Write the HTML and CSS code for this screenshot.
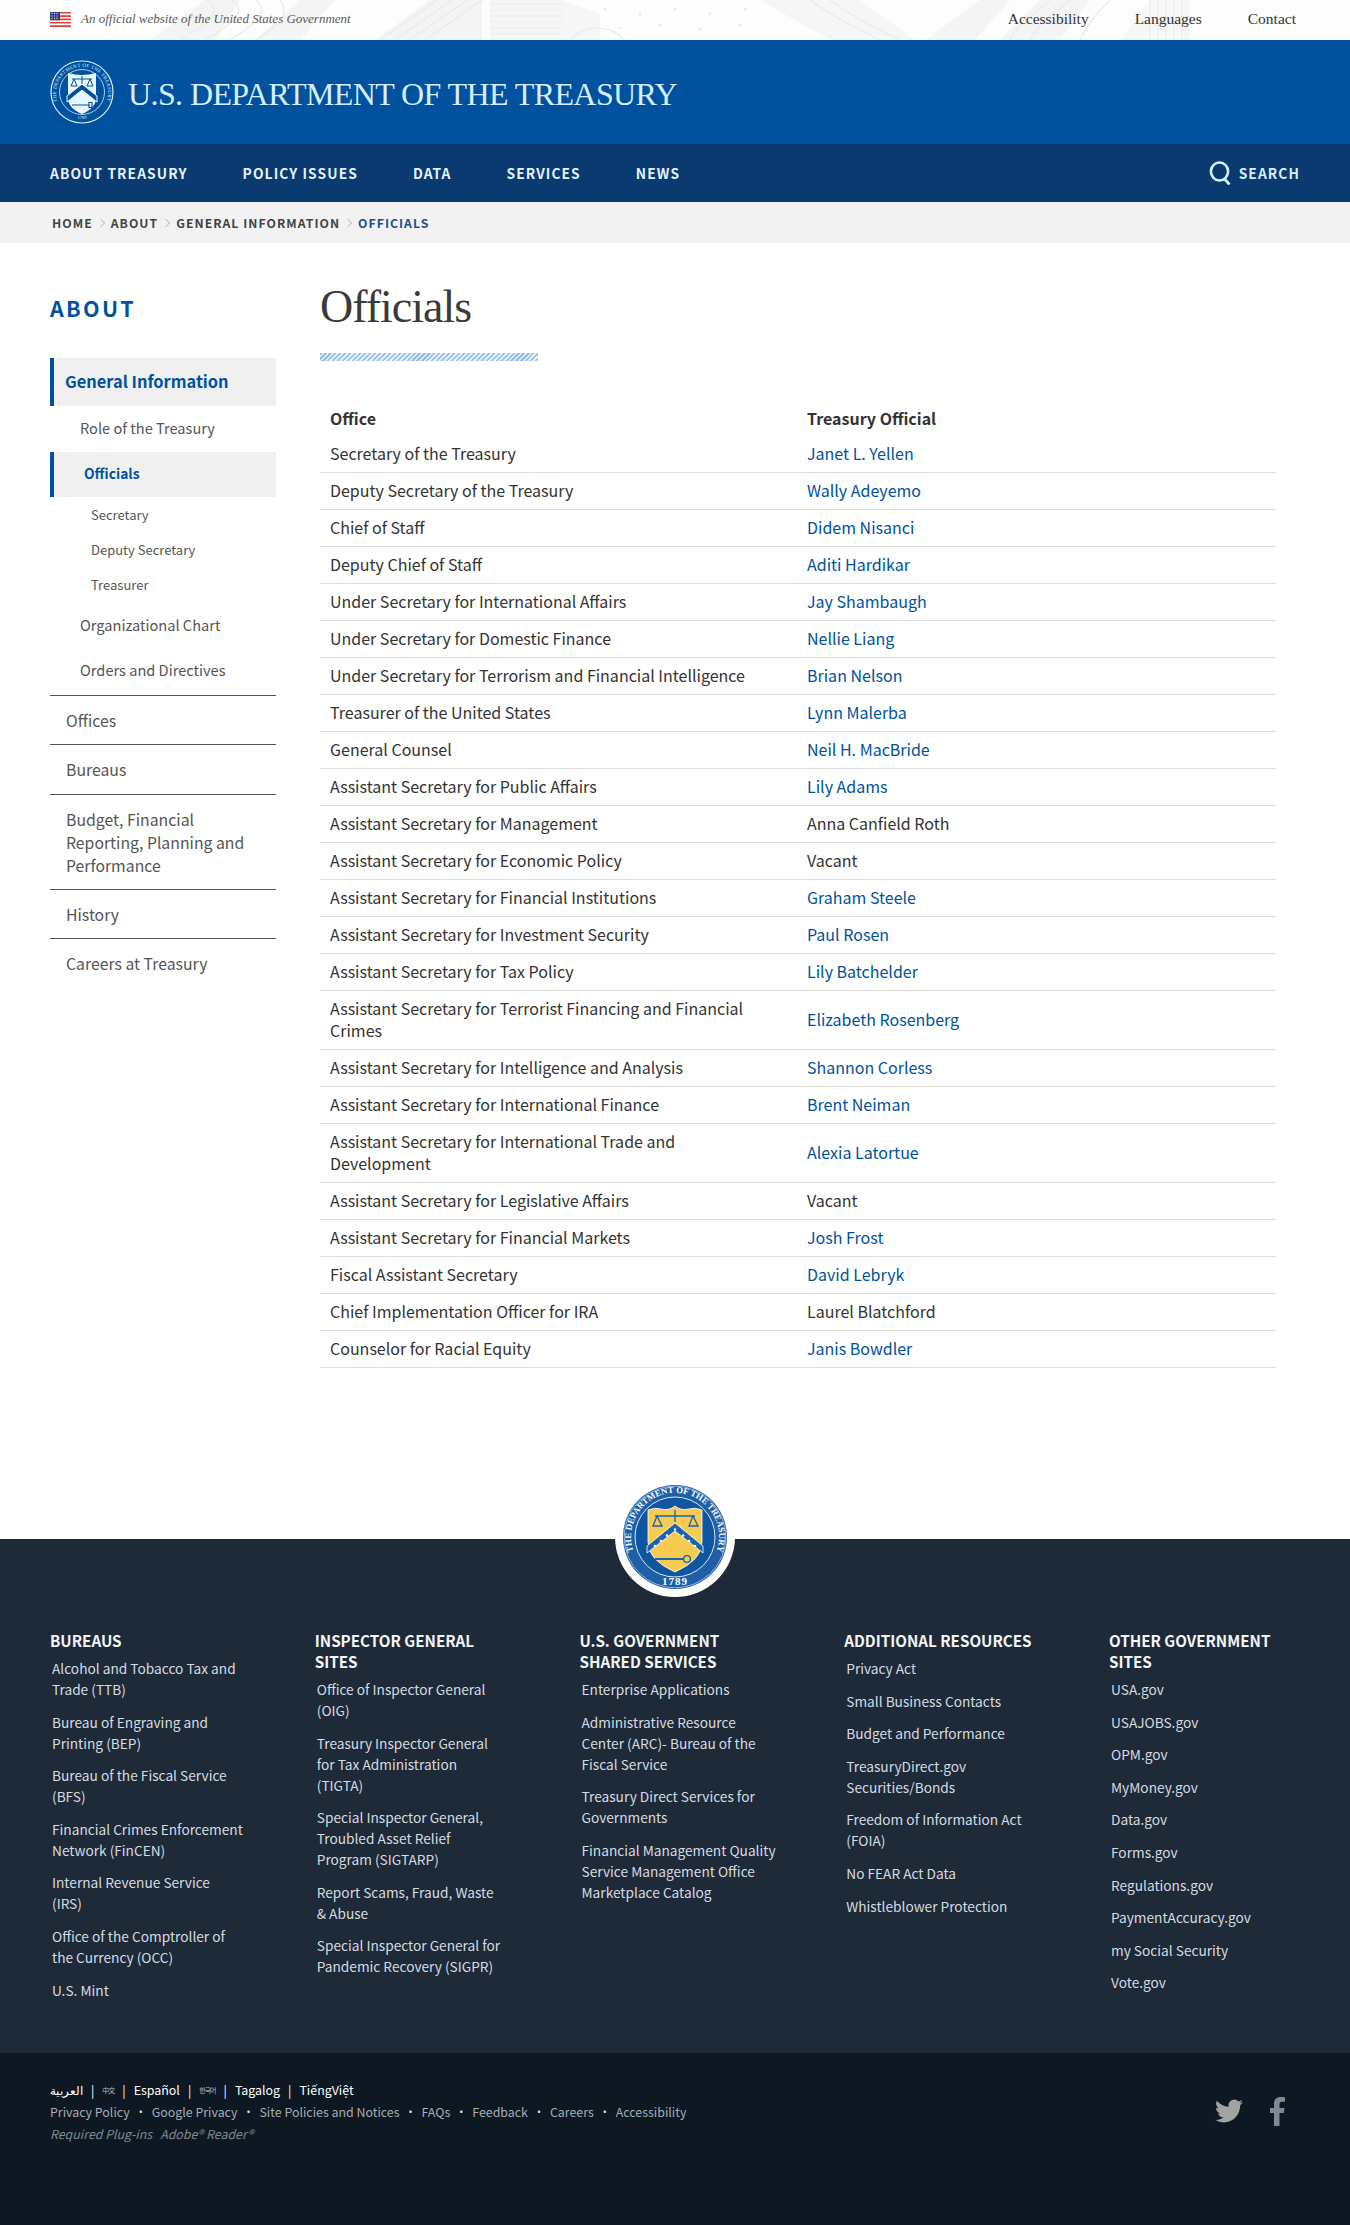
FILE: index.html
```html
<!DOCTYPE html>
<html lang="en">
<head>
<meta charset="utf-8">
<title>Officials | U.S. Department of the Treasury</title>
<link rel="stylesheet" href="styles.css">
</head>
<body>
<div class="gov-bar">
  <svg class="gov-art" viewBox="0 0 1350 40" preserveAspectRatio="none" aria-hidden="true">
    <g fill="#f4f4f4">
      <path d="M150 40 L205 0 H240 L215 40Z M255 40 L300 0 H335 L300 40Z"/>
      <path d="M375 40 L430 0 H482 V40Z"/>
      <path d="M490 40 V0 H563 L600 14 V40Z" fill="#f6f6f6"/>
      <path d="M760 0 H860 L915 40 H830Z" fill="#f6f6f6"/>
      <path d="M925 40 L980 0 H1010 L975 40Z M1000 40 L1040 0 H1090 L1060 40Z"/>
      <path d="M1120 40 L1150 0 H1190 V40Z" fill="#f7f7f7"/>
    </g>
    <g fill="none" stroke="#ebebeb" stroke-width="1.200">
      <path d="M180 40 C215 20 225 8 200 -4 M205 40 C240 20 250 8 225 -4 M230 40 C262 20 272 8 250 -4 M255 40 C285 22 292 8 275 -4"/>
      <path d="M380 40 L440 -2 M395 40 L455 -2 M410 40 L470 -2 M425 40 L485 -2"/>
      <path d="M490 4H563 M490 10H563 M490 16H563 M490 22H563 M490 28H563 M490 34H563"/>
      <path d="M570 40 C585 24 610 24 625 40"/>
      <path d="M880 40 C850 25 830 15 810 0 M900 40 C870 25 850 15 830 0"/>
      <path d="M1010 40 C1020 20 1040 10 1050 0 M1030 40 C1040 20 1060 10 1070 0 M1080 40 C1090 20 1100 10 1110 0"/>
      <path d="M1150 40V0 M1158 40V0 M1166 40V0 M1174 40V0 M1182 40V0"/>
    </g>
    <g fill="#e9e9e9">
      <circle cx="605" cy="9" r="1.500"/><circle cx="640" cy="14" r="1.500"/><circle cx="675" cy="9" r="1.500"/><circle cx="710" cy="14" r="1.500"/><circle cx="745" cy="9" r="1.500"/>
      <circle cx="620" cy="28" r="1.500"/><circle cx="660" cy="25" r="1.500"/><circle cx="700" cy="29" r="1.500"/><circle cx="740" cy="25" r="1.500"/>
    </g>
  </svg>
  <div class="gov-note">
    <svg class="flag" viewBox="0 0 21 15" aria-hidden="true">
      <rect width="21" height="15" fill="#fff"/>
      <path d="M0 0h21v1.600H0zM0 3.300h21v1.600H0zM0 6.600h21v1.600H0zM0 9.900h21v1.600H0zM0 13.200h21V15H0z" fill="#d8433f"/>
      <rect width="10" height="8.200" fill="#2e3f7f"/>
      <path d="M1.500 1.500h1M4 1.500h1M6.500 1.500h1M1.500 4h1M4 4h1M6.500 4h1M1.500 6.400h1M4 6.400h1M6.500 6.400h1" stroke="#fff" stroke-width="1"/>
    </svg>
    <em>An official website of the United States Government</em>
  </div>
  <nav class="gov-links">
    <a href="#">Accessibility</a>
    <a href="#">Languages</a>
    <a href="#">Contact</a>
  </nav>
</div>

<header class="masthead">
  <svg class="mast-seal" viewBox="0 0 64 64" aria-hidden="true">
    <defs><path id="mastArc" d="M7 40 A26 26 0 1 1 57 40"/></defs>
    <circle cx="32" cy="32" r="31" fill="none" stroke="#d6eeff" stroke-width="1.200"/>
    <circle cx="32" cy="32" r="22.500" fill="none" stroke="#d6eeff" stroke-width=".8"/>
    <text class="mast-seal-text"><textPath href="#mastArc" startOffset="50%" text-anchor="middle">THE DEPARTMENT OF THE TREASURY</textPath></text>
    <text class="mast-seal-year" x="32" y="59" text-anchor="middle">1789</text>
    <path d="M18 13 Q32 17 46 13 V38 Q46 48 32 54 Q18 48 18 38Z" fill="#eaf6ff"/>
    <path d="M17 36 L32 24 L47 36 V42 L32 30 L17 42Z" fill="#00529f" stroke="#eaf6ff" stroke-width="1"/>
    <path d="M22 19H42 M32 16V24 M24 19L21 26H27Z M40 19L37 26H43Z" fill="none" stroke="#00529f" stroke-width="1"/>
    <path d="M22 45H39 M39 42.500h3v5h-3z" fill="none" stroke="#00529f" stroke-width="1.200"/>
  </svg>
  <div class="mast-title">U.S. DEPARTMENT OF THE TREASURY</div>
</header>

<nav class="main-nav">
  <div class="main-links">
    <a href="#">ABOUT TREASURY</a>
    <a href="#">POLICY ISSUES</a>
    <a href="#">DATA</a>
    <a href="#">SERVICES</a>
    <a href="#">NEWS</a>
  </div>
  <a class="search" href="#">
    <svg class="search-icon" viewBox="0 0 23 24" aria-hidden="true">
      <ellipse cx="10.500" cy="10.500" rx="8.600" ry="9" fill="none" stroke="#d6eeff" stroke-width="2.600"/>
      <path d="M15.500 18 L20.500 23.500" stroke="#d6eeff" stroke-width="2.800"/>
    </svg>
    SEARCH
  </a>
</nav>

<div class="crumbs">
  <a href="#">HOME</a><span class="crumb-sep"></span>
  <a href="#">ABOUT</a><span class="crumb-sep"></span>
  <a href="#">GENERAL INFORMATION</a><span class="crumb-sep"></span>
  <a class="crumb-current" href="#">OFFICIALS</a>
</div>

<div class="page">
  <aside class="side">
    <h2 class="side-title">ABOUT</h2>
    <a class="side-main is-active" href="#">General Information</a>
    <a class="side-sub side-sub-first" href="#">Role of the Treasury</a>
    <a class="side-current" href="#">Officials</a>
    <a class="side-leaf" href="#">Secretary</a>
    <a class="side-leaf" href="#">Deputy Secretary</a>
    <a class="side-leaf" href="#">Treasurer</a>
    <a class="side-sub side-sub-gap" href="#">Organizational Chart</a>
    <a class="side-sub side-sub-last" href="#">Orders and Directives</a>
    <a class="side-item" href="#">Offices</a>
    <a class="side-item" href="#">Bureaus</a>
    <a class="side-item" href="#">Budget, Financial Reporting, Planning and Performance</a>
    <a class="side-item" href="#">History</a>
    <a class="side-item" href="#">Careers at Treasury</a>
  </aside>
  <main class="content">
    <h1 class="page-title">Officials</h1>
    <div class="stripes"></div>
    <table class="officials">
      <thead><tr><th>Office</th><th>Treasury Official</th></tr></thead>
      <tbody>
        <tr><td>Secretary of the Treasury</td><td><a href="#">Janet L. Yellen</a></td></tr>
        <tr><td>Deputy Secretary of the Treasury</td><td><a href="#">Wally Adeyemo</a></td></tr>
        <tr><td>Chief of Staff</td><td><a href="#">Didem Nisanci</a></td></tr>
        <tr><td>Deputy Chief of Staff</td><td><a href="#">Aditi Hardikar</a></td></tr>
        <tr><td>Under Secretary for International Affairs</td><td><a href="#">Jay Shambaugh</a></td></tr>
        <tr><td>Under Secretary for Domestic Finance</td><td><a href="#">Nellie Liang</a></td></tr>
        <tr><td>Under Secretary for Terrorism and Financial Intelligence</td><td><a href="#">Brian Nelson</a></td></tr>
        <tr><td>Treasurer of the United States</td><td><a href="#">Lynn Malerba</a></td></tr>
        <tr><td>General Counsel</td><td><a href="#">Neil H. MacBride</a></td></tr>
        <tr><td>Assistant Secretary for Public Affairs</td><td><a href="#">Lily Adams</a></td></tr>
        <tr><td>Assistant Secretary for Management</td><td>Anna Canfield Roth</td></tr>
        <tr><td>Assistant Secretary for Economic Policy</td><td>Vacant</td></tr>
        <tr><td>Assistant Secretary for Financial Institutions</td><td><a href="#">Graham Steele</a></td></tr>
        <tr><td>Assistant Secretary for Investment Security</td><td><a href="#">Paul Rosen</a></td></tr>
        <tr><td>Assistant Secretary for Tax Policy</td><td><a href="#">Lily Batchelder</a></td></tr>
        <tr><td>Assistant Secretary for Terrorist Financing and Financial Crimes</td><td><a href="#">Elizabeth Rosenberg</a></td></tr>
        <tr><td>Assistant Secretary for Intelligence and Analysis</td><td><a href="#">Shannon Corless</a></td></tr>
        <tr><td>Assistant Secretary for International Finance</td><td><a href="#">Brent Neiman</a></td></tr>
        <tr><td>Assistant Secretary for International Trade and Development</td><td><a href="#">Alexia Latortue</a></td></tr>
        <tr><td>Assistant Secretary for Legislative Affairs</td><td>Vacant</td></tr>
        <tr><td>Assistant Secretary for Financial Markets</td><td><a href="#">Josh Frost</a></td></tr>
        <tr><td>Fiscal Assistant Secretary</td><td><a href="#">David Lebryk</a></td></tr>
        <tr><td>Chief Implementation Officer for IRA</td><td>Laurel Blatchford</td></tr>
        <tr><td>Counselor for Racial Equity</td><td><a href="#">Janis Bowdler</a></td></tr>
      </tbody>
    </table>
  </main>
</div>

<footer class="site-footer">
  <svg class="foot-seal" viewBox="0 0 120 120" aria-hidden="true">
    <defs><path id="sealArc" d="M24 85.200 A44 44 0 1 1 96 85.200"/></defs>
    <circle cx="60" cy="60" r="60" fill="#fff"/>
    <circle cx="60" cy="60" r="52" fill="#1f5fa8"/>
    <circle cx="60" cy="60" r="50.800" fill="none" stroke="#8db7dd" stroke-width="1"/>
    <circle cx="60" cy="60" r="40" fill="#0e56a0" stroke="#d8e8f5" stroke-width="1"/>
    <text class="seal-text"><textPath href="#sealArc" startOffset="50%" text-anchor="middle">THE DEPARTMENT OF THE TREASURY</textPath></text>
    <text class="seal-year" x="60" y="108" text-anchor="middle">1789</text>
    <g transform="translate(0 3)">
      <path d="M33 30 Q40 27 46 29 Q54 31 60 26 Q66 31 74 29 Q80 27 87 30 V62 Q87 80 60 92 Q33 80 33 62Z" fill="#f5cb52" stroke="#fff" stroke-width=".8"/>
      <path d="M32 66 L60 43 L88 66 V73 L60 51 L32 73Z" fill="#1b63ad" stroke="#fff" stroke-width=".8"/>
      <g fill="#fff">
        <circle cx="40" cy="66" r="1.300"/><circle cx="46" cy="61" r="1.300"/><circle cx="52" cy="55.500" r="1.300"/><circle cx="60" cy="49.500" r="1.300"/>
        <circle cx="68" cy="55.500" r="1.300"/><circle cx="74" cy="61" r="1.300"/><circle cx="80" cy="66" r="1.300"/>
      </g>
      <path d="M40 36 H80 M60 30 V42 M42 36 L38 46 H47 Z M78 36 L74 46 H83 Z" fill="none" stroke="#1b63ad" stroke-width="1.300"/>
      <path d="M40 79 H68" stroke="#1b63ad" stroke-width="2"/>
      <circle cx="72" cy="79" r="3.400" fill="none" stroke="#1b63ad" stroke-width="1.400"/>
    </g>
  </svg>
  <div class="foot-cols">
    <section class="foot-col">
      <h3>BUREAUS</h3>
      <a href="#">Alcohol and Tobacco Tax and<br>Trade (TTB)</a>
      <a href="#">Bureau of Engraving and<br>Printing (BEP)</a>
      <a href="#">Bureau of the Fiscal Service<br>(BFS)</a>
      <a href="#">Financial Crimes Enforcement<br>Network (FinCEN)</a>
      <a href="#">Internal Revenue Service<br>(IRS)</a>
      <a href="#">Office of the Comptroller of<br>the Currency (OCC)</a>
      <a href="#">U.S. Mint</a>
    </section>
    <section class="foot-col">
      <h3>INSPECTOR GENERAL SITES</h3>
      <a href="#">Office of Inspector General<br>(OIG)</a>
      <a href="#">Treasury Inspector General<br>for Tax Administration<br>(TIGTA)</a>
      <a href="#">Special Inspector General,<br>Troubled Asset Relief<br>Program (SIGTARP)</a>
      <a href="#">Report Scams, Fraud, Waste<br>&amp; Abuse</a>
      <a href="#">Special Inspector General for<br>Pandemic Recovery (SIGPR)</a>
    </section>
    <section class="foot-col">
      <h3>U.S. GOVERNMENT SHARED SERVICES</h3>
      <a href="#">Enterprise Applications</a>
      <a href="#">Administrative Resource<br>Center (ARC)- Bureau of the<br>Fiscal Service</a>
      <a href="#">Treasury Direct Services for<br>Governments</a>
      <a href="#">Financial Management Quality<br>Service Management Office<br>Marketplace Catalog</a>
    </section>
    <section class="foot-col">
      <h3>ADDITIONAL RESOURCES</h3>
      <a href="#">Privacy Act</a>
      <a href="#">Small Business Contacts</a>
      <a href="#">Budget and Performance</a>
      <a href="#">TreasuryDirect.gov<br>Securities/Bonds</a>
      <a href="#">Freedom of Information Act<br>(FOIA)</a>
      <a href="#">No FEAR Act Data</a>
      <a href="#">Whistleblower Protection</a>
    </section>
    <section class="foot-col">
      <h3>OTHER GOVERNMENT SITES</h3>
      <a href="#">USA.gov</a>
      <a href="#">USAJOBS.gov</a>
      <a href="#">OPM.gov</a>
      <a href="#">MyMoney.gov</a>
      <a href="#">Data.gov</a>
      <a href="#">Forms.gov</a>
      <a href="#">Regulations.gov</a>
      <a href="#">PaymentAccuracy.gov</a>
      <a href="#">my Social Security</a>
      <a href="#">Vote.gov</a>
    </section>
  </div>
  <div class="foot-base">
    <div class="foot-legal">
      <div class="lang-row">
        <a href="#">العربية</a><i>|</i><a class="lang-small" href="#">中文</a><i>|</i><a href="#">Español</a><i>|</i><a class="lang-small" href="#">한국어</a><i>|</i><a href="#">Tagalog</a><i>|</i><a href="#">TiếngViệt</a>
      </div>
      <div class="legal-row">
        <a href="#">Privacy Policy</a><i>•</i><a href="#">Google Privacy</a><i>•</i><a href="#">Site Policies and Notices</a><i>•</i><a href="#">FAQs</a><i>•</i><a href="#">Feedback</a><i>•</i><a href="#">Careers</a><i>•</i><a href="#">Accessibility</a>
      </div>
      <div class="plugin-row"><em>Required Plug-ins</em><em>Adobe® Reader®</em></div>
    </div>
    <div class="social">
      <svg class="tw" viewBox="0 0 24 24" aria-hidden="true"><path d="M23.950 4.570a10 10 0 0 1-2.820.77 4.960 4.960 0 0 0 2.160-2.720 9.900 9.900 0 0 1-3.130 1.190 4.920 4.920 0 0 0-8.380 4.480A13.980 13.980 0 0 1 1.640 3.160a4.920 4.920 0 0 0 1.520 6.570 4.900 4.900 0 0 1-2.230-.61v.06a4.920 4.920 0 0 0 3.950 4.830 4.900 4.900 0 0 1-2.220.08 4.930 4.930 0 0 0 4.600 3.420A9.870 9.870 0 0 1 0 19.540a13.940 13.940 0 0 0 7.550 2.210c9.050 0 14-7.500 14-13.980 0-.21 0-.42-.02-.63a10 10 0 0 0 2.460-2.550z"/></svg>
      <svg class="fb" viewBox="0 0 15 29" aria-hidden="true"><path d="M4 29V16H0v-5h4V7c0-4.400 2.600-7 6.600-7 1.700 0 3.400.2 4.400.3v4.500h-2.800C10 4.800 9.500 6 9.500 7.500V11h5l-.7 5H9.500v13z"/></svg>
    </div>
  </div>
</footer>
</body>
</html>
```
FILE: styles.css
```css
* { box-sizing: border-box; }
html, body { margin: 0; padding: 0; }
body {
  font-family: "Noto Sans CJK SC", "Noto Sans", sans-serif;
  color: #333;
  background: #fff;
  width: 1350px;
  overflow-x: hidden;
}
a { color: inherit; text-decoration: none; }

.gov-bar {
  position: relative;
  height: 40px;
  padding: 0 54px 2px 50px;
  display: flex;
  justify-content: space-between;
  align-items: center;
  background: #fdfdfd;
  font-family: "Liberation Serif", serif;
}
.gov-art { position: absolute; left: 0; top: 0; width: 100%; height: 100%; }
.gov-note { position: relative; display: flex; align-items: center; gap: 10px; font-size: 13px; color: #5b5b5b; }
.flag { width: 21px; height: 15px; display: block; }
.gov-links { position: relative; display: flex; gap: 46px; font-size: 15.500px; color: #333; }

.masthead {
  height: 104px;
  background: #00529f;
  padding: 0 50px;
  display: flex;
  align-items: center;
  gap: 14px;
}
.mast-seal { width: 64px; height: 64px; display: block; flex: none; }
.mast-seal-text { font: 5px "Liberation Serif", serif; fill: #d6eeff; letter-spacing: .3px; }
.mast-seal-year { font: 4.500px "Liberation Serif", serif; fill: #d6eeff; }
.mast-title {
  font-family: "Liberation Serif", serif;
  font-size: 32px;
  letter-spacing: -.6px;
  line-height: 40px;
  padding-top: 3px;
  color: #d6eeff;
  white-space: nowrap;
}

.main-nav {
  height: 58px;
  background: #0a3a70;
  padding: 0 50px;
  display: flex;
  align-items: center;
  justify-content: space-between;
  font-weight: 700;
  font-size: 13.800px;
  letter-spacing: 1.080px;
  color: #e4f2fd;
}
.main-links { display: flex; gap: 55px; }
.search { display: flex; align-items: center; gap: 7px; color: #d6eeff; }
.search-icon { width: 23px; height: 24px; display: block; }

.crumbs {
  height: 41px;
  background: #f2f2f2;
  padding: 0 0 0 52px;
  display: flex;
  align-items: center;
  font-size: 12.200px;
  font-weight: 700;
  letter-spacing: 1.050px;
  color: #444;
}
.crumb-sep {
  width: 6px; height: 6px;
  margin: 0 7px 0 5px;
  border-top: 1px solid #c4c4c4;
  border-right: 1px solid #c4c4c4;
  transform: rotate(45deg);
}
.crumb-current { color: #1d4f8c; }

.page { display: flex; padding: 0 74px 0 50px; gap: 44px; height: 1296px; }
.side { width: 226px; flex: none; }
.side-title { margin: 50px 0 0; font-size: 21.500px; line-height: 30px; letter-spacing: 2.300px; font-weight: 700; color: #00529f; }
.side-main, .side-current {
  display: flex;
  align-items: center;
  background: #f0f0f0;
  border-left: 4px solid #00529f;
  color: #00529f;
  font-weight: 700;
  padding-bottom: 3px;
}
.side-main { height: 48px; margin-top: 35px; padding-left: 11px; font-size: 16.400px; }
.side-sub { display: flex; align-items: center; padding: 0 0 3px 30px; font-size: 14.600px; color: #555; }
.side-sub-first { height: 46px; }
.side-current { height: 45px; padding-left: 30px; font-size: 13.800px; }
.side-leaf { display: flex; align-items: center; height: 35px; padding: 0 0 1px 41px; font-size: 13px; color: #555; }
.side-sub-gap { height: 45px; margin-top: 1px; }
.side-sub-last { height: 46px; margin-bottom: 1px; }
.side-item {
  display: block;
  border-top: 1px solid #555;
  padding: 13px 16px 12.300px;
  font-size: 15.800px;
  line-height: 23px;
  color: #555;
}

.content { flex: 1; min-width: 0; }
.page-title {
  margin: 38px 0 0;
  font-family: "Liberation Serif", serif;
  font-weight: 400;
  font-size: 46px;
  letter-spacing: -1px;
  line-height: 52px;
  color: #3a3a3a;
}
.stripes {
  width: 218px;
  height: 8px;
  margin-top: 20px;
  background: repeating-linear-gradient(135deg, #94bfe4 0 1.500px, #e3eef8 1.500px 3.500px);
}
.officials {
  width: 956px;
  margin-top: 40px;
  border-collapse: collapse;
  table-layout: fixed;
  font-size: 16px;
  line-height: 22px;
}
.officials th {
  text-align: left;
  font-weight: 700;
  padding: 6px 10px 7px;
  color: #333;
}
.officials td {
  padding: 6px 10px 8px;
  border-bottom: 1px solid #ddd;
}
.officials th:first-child, .officials td:first-child { width: 477px; padding-right: 20px; }
.officials a { color: #00529f; }

.site-footer { position: relative; background: #1e2a38; color: #d5dbe1; }
.foot-seal { position: absolute; left: 615px; top: -62px; width: 120px; height: 120px; display: block; }
.seal-text { font: 700 8.800px "Liberation Serif", serif; fill: #fff; }
.seal-year { font: 700 11px "Liberation Serif", serif; fill: #fff; letter-spacing: 1px; }
.foot-cols {
  display: grid;
  grid-template-columns: repeat(4, 264.750px) 1fr;
  padding: 91px 50px 0;
  height: 514px;
}
.foot-col { width: 192px; }
.foot-col h3 {
  margin: 0 0 7px;
  font-size: 15.200px;
  line-height: 21px;
  font-weight: 700;
  color: #f4f6f8;
}
.foot-col a {
  display: block;
  padding-left: 2px;
  margin-bottom: 11.600px;
  font-size: 13.700px;
  line-height: 21px;
  white-space: nowrap;
}
.foot-base {
  height: 172px;
  background: #0d1822;
  padding: 26px 50px 0;
  display: flex;
  justify-content: space-between;
}
.foot-legal { font-size: 12.400px; line-height: 22px; }
.lang-row { color: #fff; display: flex; }
.lang-row i { font-style: normal; margin: 0 8px; }
.lang-small { font-size: 7px; letter-spacing: -1px; color: #b8bec4; }
.legal-row { color: #a5adb5; display: flex; }
.legal-row i { font-style: normal; margin: 0 5px; font-size: 12px; color: #d8dcdf; }
.plugin-row { color: #808890; display: flex; gap: 8px; }
.social { display: flex; align-items: flex-start; gap: 27px; padding: 18px 15px 0 0; }
.tw { width: 28px; height: 28px; fill: #a3a3a3; display: block; }
.fb { width: 15px; height: 29px; fill: #7d8a94; display: block; }
```
